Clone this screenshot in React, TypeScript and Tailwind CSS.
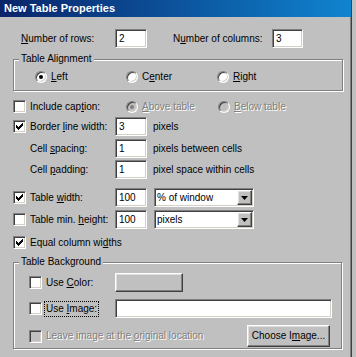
import React from 'react';

const sunken =
  'border border-t-[#808080] border-l-[#808080] border-b-white border-r-white shadow-[inset_1px_1px_0_#404040,inset_-1px_-1px_0_#d4d0c8]';
const raised =
  'border border-t-white border-l-white border-b-[#404040] border-r-[#404040] shadow-[inset_-1px_-1px_0_#808080,inset_1px_1px_0_#dfdfdf]';
const disabledText = 'text-[#808080] [text-shadow:1px_1px_0_#ffffff]';

function Check() {
  // classic 7x7 pixel check mark
  const cols = [2, 3, 4, 3, 2, 1, 0];
  return (
    <svg width="9" height="9" viewBox="0 0 9 9" className="block">
      {cols.map((y, x) => (
        <rect key={x} x={x + 1} y={y + 1} width="1" height="3" fill="#000" />
      ))}
    </svg>
  );
}

function Checkbox({ checked = false, disabled = false }: { checked?: boolean; disabled?: boolean }) {
  return (
    <div
      className={`w-[13px] h-[13px] shrink-0 flex items-center justify-center ${sunken} ${
        disabled ? 'bg-[#c0c0c0]' : 'bg-white'
      }`}
    >
      {checked && <Check />}
    </div>
  );
}

function Radio({ checked = false, disabled = false }: { checked?: boolean; disabled?: boolean }) {
  return (
    <div
      className={`w-[12px] h-[12px] shrink-0 rounded-full flex items-center justify-center border border-t-[#808080] border-l-[#808080] border-b-white border-r-white shadow-[inset_1px_1px_0_#404040,inset_-1px_-1px_0_#d4d0c8] ${
        disabled ? 'bg-[#c0c0c0]' : 'bg-white'
      }`}
    >
      {checked && (
        <div className={`w-[4px] h-[4px] rounded-full ${disabled ? 'bg-[#808080]' : 'bg-black'}`} />
      )}
    </div>
  );
}

function TextBox({ value = '', w }: { value?: string; w: string }) {
  return (
    <div className={`${w} h-[19px] shrink-0 bg-white ${sunken} flex items-center pl-[3px]`}>{value}</div>
  );
}

function Select({ value }: { value: string }) {
  return (
    <div className={`w-[100px] h-[19px] shrink-0 bg-white ${sunken} flex items-center pl-[2px] pr-[1px]`}>
      <span className="flex-1">{value}</span>
      <div className={`w-[15px] h-[15px] bg-[#c0c0c0] ${raised} flex items-center justify-center`}>
        <svg width="7" height="4" viewBox="0 0 7 4" className="block">
          <path d="M0 0h7L3.5 4z" fill="#000" />
        </svg>
      </div>
    </div>
  );
}

function GroupBox({ title, className, children }: { title: string; className: string; children: React.ReactNode }) {
  return (
    <div
      className={`relative ml-[13px] border border-[#808080] shadow-[1px_1px_0_#ffffff,inset_1px_1px_0_#ffffff] ${className}`}
    >
      <span className="absolute left-[5px] -top-[6px] px-[2px] bg-[#c0c0c0]">{title}</span>
      {children}
    </div>
  );
}

export default function App() {
  return (
    <div className="w-[356px] h-[357px] bg-[#c0c0c0] flex overflow-hidden font-['Liberation_Sans',Arial,sans-serif] text-[10px] leading-none text-black">
      <div className="w-[352px] h-full flex flex-col border-r border-[#404040] shadow-[inset_-1px_0_0_#808080]">
        <div className="h-[17px] shrink-0 bg-linear-to-r from-[#0a246a] to-[#1084d0] flex items-center pl-[4px] text-white font-bold text-[11px]">
          New Table Properties
        </div>

        <div className="mt-[12px] h-[19px] flex items-center pl-[21px]">
          <span className="w-[94px]">
            <u>N</u>umber of rows:
          </span>
          <TextBox value="2" w="w-[32px]" />
          <span className="ml-[26px] w-[99px]">
            N<u>u</u>mber of columns:
          </span>
          <TextBox value="3" w="w-[31px]" />
        </div>

        <GroupBox title="Table Alignment" className="mt-[11px] w-[330px] h-[32px]">
          <div className="pt-[10px] pl-[21px] flex h-[23px] items-center">
            <div className="w-[91px] flex items-center">
              <Radio checked />
              <span className="ml-[4px]">
                <u>L</u>eft
              </span>
            </div>
            <div className="w-[91px] flex items-center">
              <Radio />
              <span className="ml-[4px]">
                C<u>e</u>nter
              </span>
            </div>
            <div className="flex items-center">
              <Radio />
              <span className="ml-[4px]">
                <u>R</u>ight
              </span>
            </div>
          </div>
        </GroupBox>

        <div className="mt-[6px] h-[19px] flex items-center pl-[13px]">
          <div className="w-[113px] flex items-center">
            <Checkbox />
            <span className="ml-[4px]">
              Include cap<u>t</u>ion:
            </span>
          </div>
          <div className="w-[92px] flex items-center">
            <Radio checked disabled />
            <span className={`ml-[4px] ${disabledText}`}>
              <u>A</u>bove table
            </span>
          </div>
          <div className="flex items-center">
            <Radio disabled />
            <span className={`ml-[4px] ${disabledText}`}>
              <u>B</u>elow table
            </span>
          </div>
        </div>

        <div className="mt-[1px] h-[19px] flex items-center pl-[13px]">
          <div className="w-[102px] flex items-center">
            <Checkbox checked />
            <span className="ml-[4px]">
              Border <u>l</u>ine width:
            </span>
          </div>
          <TextBox value="3" w="w-[32px]" />
          <span className="ml-[6px]">pixels</span>
        </div>

        <div className="mt-[3px] h-[19px] flex items-center pl-[30px]">
          <span className="w-[85px]">
            Cell <u>s</u>pacing:
          </span>
          <TextBox value="1" w="w-[32px]" />
          <span className="ml-[6px]">pixels between cells</span>
        </div>

        <div className="mt-[2px] h-[19px] flex items-center pl-[30px]">
          <span className="w-[85px]">
            Cell <u>p</u>adding:
          </span>
          <TextBox value="1" w="w-[32px]" />
          <span className="ml-[6px]">pixel space within cells</span>
        </div>

        <div className="mt-[9px] h-[19px] flex items-center pl-[13px]">
          <div className="w-[102px] flex items-center">
            <Checkbox checked />
            <span className="ml-[4px]">
              Table <u>w</u>idth:
            </span>
          </div>
          <TextBox value="100" w="w-[32px]" />
          <div className="ml-[7px]">
            <Select value="% of window" />
          </div>
        </div>

        <div className="mt-[3px] h-[19px] flex items-center pl-[13px]">
          <div className="w-[102px] flex items-center">
            <Checkbox />
            <span className="ml-[4px]">
              Table min. <u>h</u>eight:
            </span>
          </div>
          <TextBox value="100" w="w-[32px]" />
          <div className="ml-[7px]">
            <Select value="pixels" />
          </div>
        </div>

        <div className="mt-[4px] h-[19px] flex items-center pl-[13px]">
          <Checkbox checked />
          <span className="ml-[4px]">
            Equal column wi<u>d</u>ths
          </span>
        </div>

        <GroupBox title="Table Background" className="mt-[10px] w-[329px] h-[87px]">
          <div className="pt-[10px] pl-[15px] flex flex-col">
            <div className="h-[19px] flex items-center">
              <div className="w-[86px] flex items-center">
                <Checkbox />
                <span className="ml-[4px]">
                  Use <u>C</u>olor:
                </span>
              </div>
              <div className={`w-[68px] h-[19px] bg-[#c0c0c0] ${raised}`} />
            </div>
            <div className="mt-[7px] h-[19px] flex items-center">
              <div className="w-[86px] flex items-center">
                <Checkbox />
                <span className="ml-[2px] px-[1px] py-[2px] border border-dotted border-black">
                  Use <u>I</u>mage:
                </span>
              </div>
              <TextBox w="w-[217px]" />
            </div>
            <div className="mt-[7px] h-[22px] flex items-center">
              <div className="w-[218px] flex items-center">
                <Checkbox disabled />
                <span className={`ml-[4px] ${disabledText}`}>
                  Leave image at the <u>o</u>riginal location
                </span>
              </div>
              <div
                className={`w-[83px] h-[22px] bg-[#c0c0c0] ${raised} flex items-center justify-center`}
              >
                Choose I<u>m</u>age...
              </div>
            </div>
          </div>
        </GroupBox>
      </div>
    </div>
  );
}
